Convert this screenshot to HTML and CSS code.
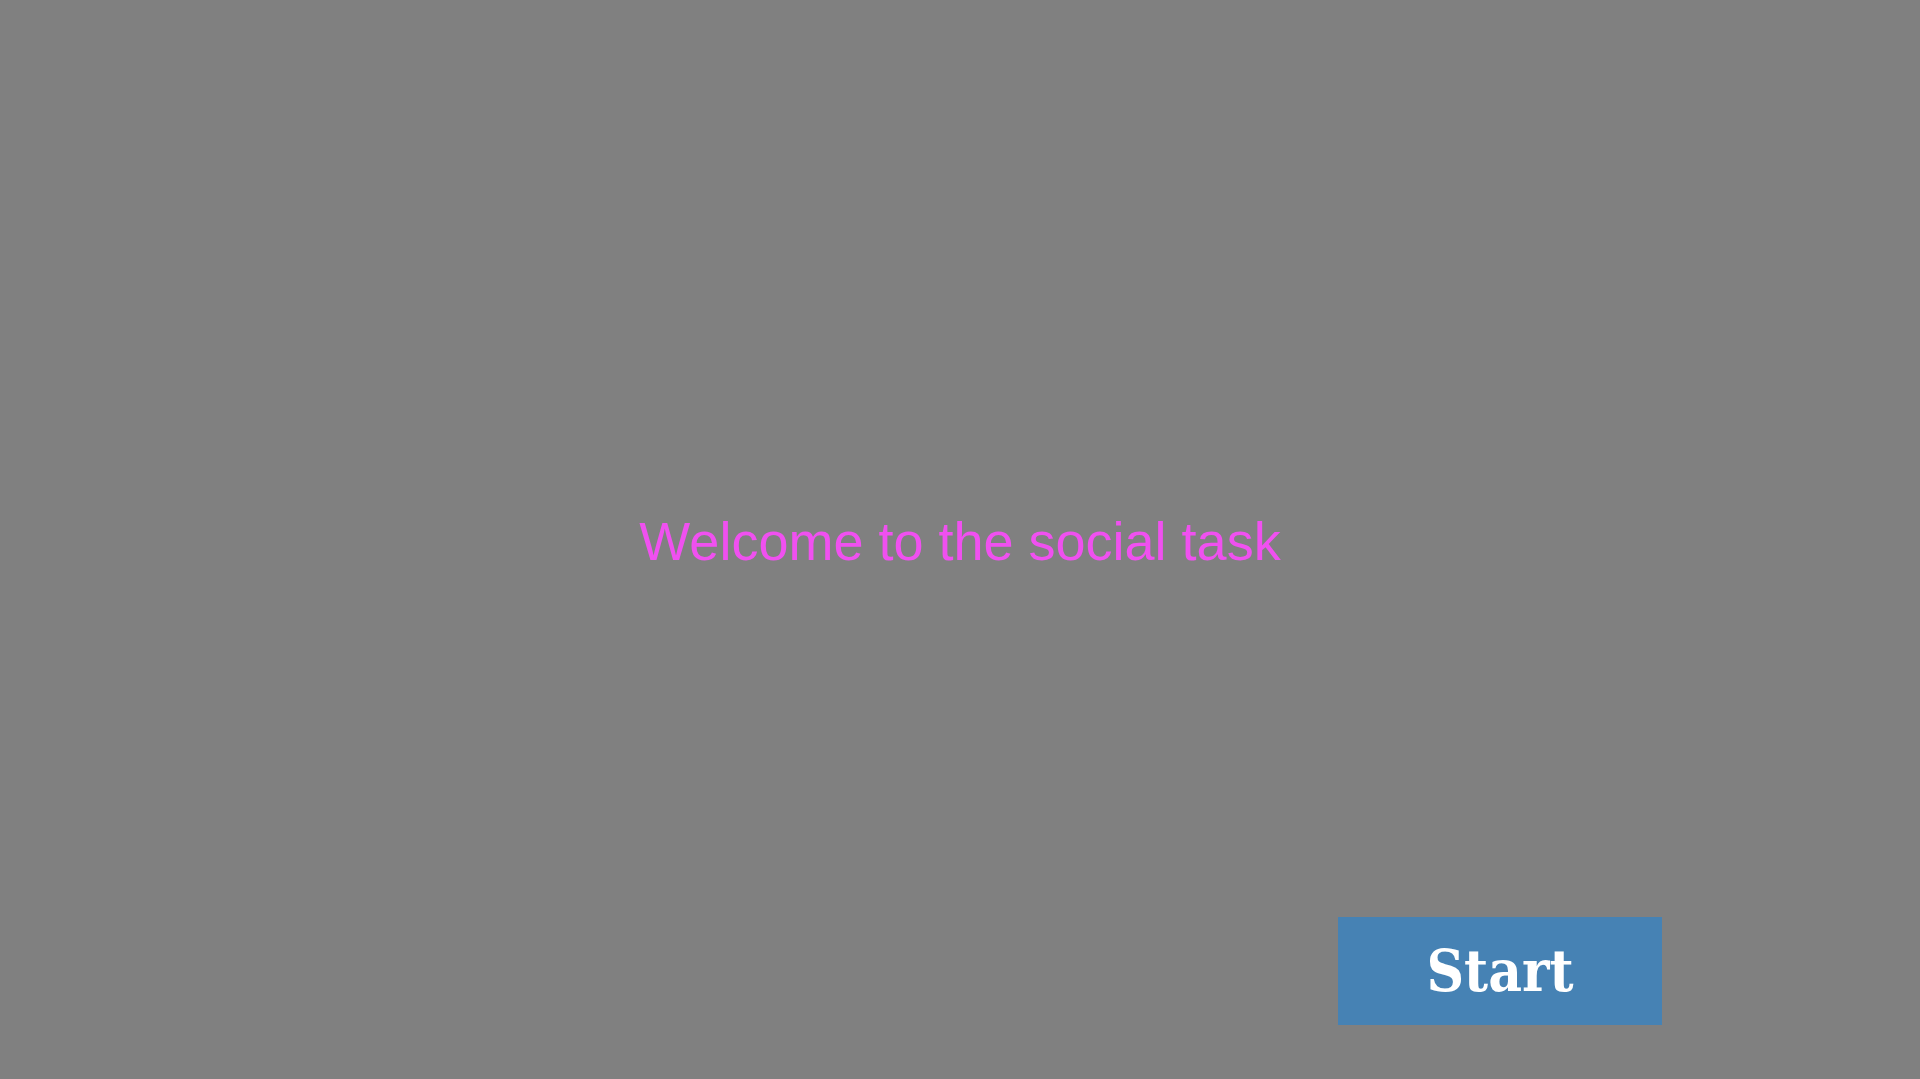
FILE: index.html
```html
<!DOCTYPE html>
<html lang="en">
<head>
<meta charset="utf-8">
<title>Social task</title>
<link rel="stylesheet" href="styles.css">
</head>
<body>
<main class="screen">
  <p class="welcome">Welcome to the social task</p>
  <div class="actions">
    <button class="start-btn" type="button">Start</button>
  </div>
</main>
</body>
</html>
```

FILE: styles.css
```css
html, body {
  margin: 0;
  padding: 0;
  background: #808080;
}

.screen {
  height: 100vh;
  box-sizing: border-box;
  display: flex;
  flex-direction: column;
  padding-top: 510px;
}

.welcome {
  margin: 0;
  text-align: center;
  font-family: "Liberation Sans", Arial, sans-serif;
  font-size: 54px;
  line-height: 62px;
  color: #f050f0;
}

.actions {
  display: flex;
  justify-content: flex-end;
  padding-right: 258px;
  margin-top: 345px;
}

.start-btn {
  width: 324px;
  height: 108px;
  border: none;
  padding: 0;
  background: #4682b4;
  color: #ffffff;
  font-family: "DejaVu Serif", "Liberation Serif", serif;
  font-weight: bold;
  font-stretch: condensed;
  font-size: 58px;
  display: flex;
  align-items: center;
  justify-content: center;
}
```
